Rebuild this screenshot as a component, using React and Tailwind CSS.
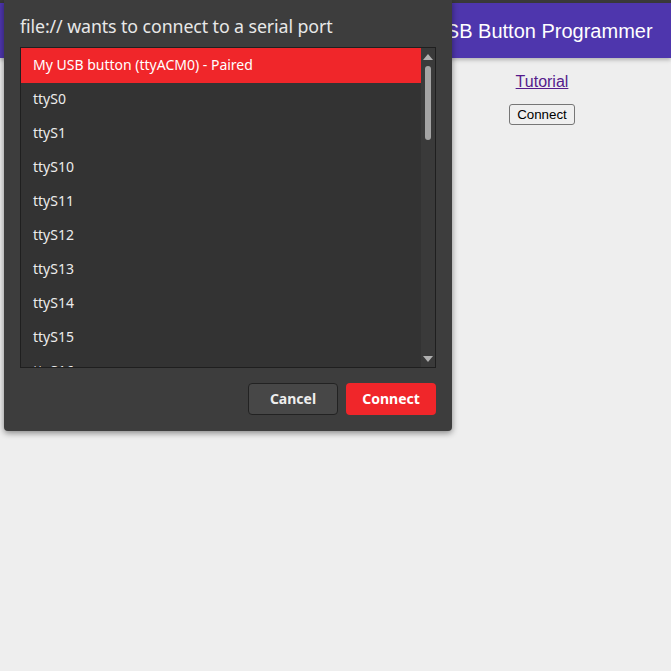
const ports = ["ttyS0", "ttyS1", "ttyS10", "ttyS11", "ttyS12", "ttyS13", "ttyS14", "ttyS15", "ttyS16"]

function SerialDialog() {
  return (
    <div
      className="absolute left-[4px] top-0 w-[448px] h-[431px] bg-[#3d3d3d] rounded-b-[4px] shadow-[0_2px_6px_rgba(0,0,0,0.45)] text-[#f2f2f2]"
      style={{ fontFamily: '"Noto Sans", "Open Sans", sans-serif' }}
    >
      <div className="pl-[16px] pt-[14px] h-[47px] text-[17.8px] leading-[24px] tracking-[-0.1px] text-[#e8e8e8]">
        file:// wants to connect to a serial port
      </div>
      <div className="ml-[16px] w-[416px] h-[321px] border border-[#1f1f1f] bg-[#333333] flex overflow-hidden">
        <div className="flex-1 flex flex-col">
          <div className="h-[35px] shrink-0 bg-[#f0262a] pl-[12px] pb-[2px] flex items-center text-[14px] text-white">
            My USB button (ttyACM0) - Paired
          </div>
          {ports.map((p) => (
            <div key={p} className="h-[34px] shrink-0 pl-[12px] pb-[3px] flex items-center text-[14px] text-[#ececec]">
              {p}
            </div>
          ))}
        </div>
        <div className="w-[14px] bg-[#3a3a3a] relative flex flex-col items-center">
          <svg width="10" height="6" viewBox="0 0 10 6" className="mt-[6px]">
            <polygon points="5,0 10,6 0,6" fill="#b0b0b0" />
          </svg>
          <div className="w-[6px] h-[74px] mt-[6px] rounded-full bg-[#a4a4a4]" />
          <svg width="10" height="6" viewBox="0 0 10 6" className="absolute bottom-[5px]">
            <polygon points="0,0 10,0 5,6" fill="#b0b0b0" />
          </svg>
        </div>
      </div>
      <div className="flex justify-end gap-[8px] pr-[16px] mt-[15px]">
        <button className="w-[90px] h-[32px] pb-[2px] rounded-[4px] bg-[#474747] border border-[#222] text-[14px] font-bold text-[#eeeeee]">
          Cancel
        </button>
        <button className="w-[90px] h-[32px] pb-[2px] rounded-[4px] bg-[#f0262a] text-[14px] font-bold text-white">
          Connect
        </button>
      </div>
    </div>
  )
}

export default function App() {
  return (
    <div className="relative w-[671px] h-[671px] bg-[#eeeeee] overflow-hidden" style={{ fontFamily: '"Liberation Sans", Arial, sans-serif' }}>
      <div className="h-[3px] bg-[#3a3a3a]" />
      <div className="h-[55px] bg-[#4e36ad] shadow-[0_2px_4px_rgba(0,0,0,0.25)] flex">
        <div className="w-[413px]" />
        <div className="flex-1 flex items-center justify-center text-white text-[20px]">USB Button Programmer</div>
      </div>
      <div className="flex">
        <div className="w-[413px]" />
        <div className="flex-1 flex flex-col items-center">
          <a href="#" className="mt-[14px] text-[16px] text-[#551a8b] underline leading-[20px]">
            Tutorial
          </a>
          <button className="mt-[12px] h-[21px] px-[7px] text-[13.33px] bg-[#efefef] border border-[#767676] rounded-[3px] text-black">
            Connect
          </button>
        </div>
      </div>
      <SerialDialog />
    </div>
  )
}
